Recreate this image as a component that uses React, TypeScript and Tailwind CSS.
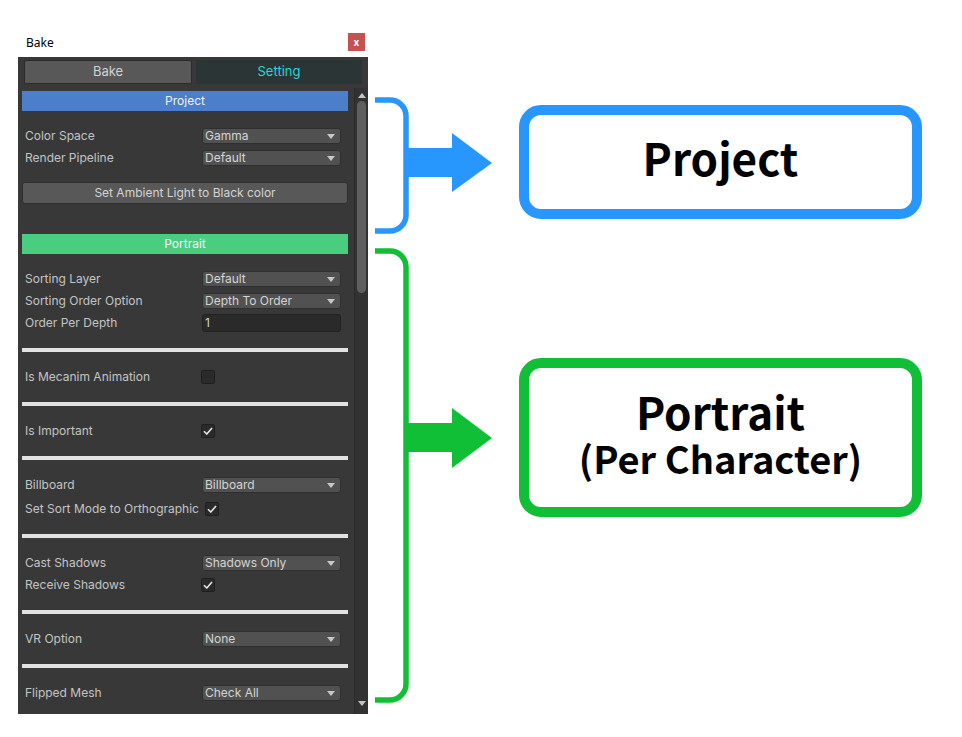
import React from 'react'

type Row =
  | { label: string; kind: 'dropdown'; value: string }
  | { label: string; kind: 'field'; value: string }
  | { label: string; kind: 'check'; on: boolean; shift?: boolean }

const portraitGroups: Row[][] = [
  [
    { label: 'Sorting Layer', kind: 'dropdown', value: 'Default' },
    { label: 'Sorting Order Option', kind: 'dropdown', value: 'Depth To Order' },
    { label: 'Order Per Depth', kind: 'field', value: '1' },
  ],
  [{ label: 'Is Mecanim Animation', kind: 'check', on: false }],
  [{ label: 'Is Important', kind: 'check', on: true }],
  [
    { label: 'Billboard', kind: 'dropdown', value: 'Billboard' },
    { label: 'Set Sort Mode to Orthographic', kind: 'check', on: true, shift: true },
  ],
  [
    { label: 'Cast Shadows', kind: 'dropdown', value: 'Shadows Only' },
    { label: 'Receive Shadows', kind: 'check', on: true },
  ],
  [{ label: 'VR Option', kind: 'dropdown', value: 'None' }],
  [{ label: 'Flipped Mesh', kind: 'dropdown', value: 'Check All' }],
]

function Dropdown({ value }: { value: string }) {
  return (
    <div className="h-[16px] w-[139px] rounded-[3px] bg-[#515151] border border-[#2f2f2f] flex items-center justify-between pl-[2px] pr-[5px] text-[#d4d4d4]">
      <span className="leading-none">{value}</span>
      <svg width="8" height="5" viewBox="0 0 8 5">
        <path d="M0 0 H8 L4 5 Z" fill="#c8c8c8" />
      </svg>
    </div>
  )
}

function Checkbox({ on }: { on: boolean }) {
  return (
    <div className="w-[14px] h-[14px] rounded-[2px] bg-[#2a2a2a] border border-[#1f1f1f] flex items-center justify-center">
      {on && (
        <svg width="10" height="8" viewBox="0 0 10 8">
          <path d="M1 4.2 L3.8 7 L9 1" fill="none" stroke="#e6e6e6" strokeWidth="1.6" />
        </svg>
      )}
    </div>
  )
}

function FieldRow({ row, extraTop }: { row: Row; extraTop?: boolean }) {
  return (
    <div className={`h-[22px] flex items-center pl-[3px] ${extraTop ? 'mt-[2px]' : ''}`}>
      <div className="w-[177px] shrink-0 whitespace-nowrap text-[#c4c4c4]">{row.label}</div>
      {row.kind === 'dropdown' && <Dropdown value={row.value} />}
      {row.kind === 'field' && (
        <div className="h-[18px] w-[139px] rounded-[3px] bg-[#2a2a2a] border border-[#212121] flex items-center pl-[2px] text-[#d4d4d4]">
          {row.value}
        </div>
      )}
      {row.kind === 'check' && (
        <div className={row.shift ? 'ml-[3px]' : '-ml-[1px]'}>
          <Checkbox on={row.on} />
        </div>
      )}
    </div>
  )
}

function Separator() {
  return <div className="h-[4px] bg-[#e2e2e2]" />
}

function UnityWindow() {
  return (
    <div className="w-[350px] ml-[18px] mt-[30px] font-['Inter',sans-serif] text-[12px]">
      <div className="h-[27px] bg-white flex items-center justify-between pl-[8px] pr-[3px]">
        <span className="font-['Noto_Sans',sans-serif] text-[12px] text-black -mt-[2px]">Bake</span>
        <div className="w-[17px] h-[18px] bg-[#c75050] flex items-center justify-center text-white text-[10px] font-bold leading-none mt-[-4px]">
          x
        </div>
      </div>
      <div className="h-[657px] bg-[#383838] flex flex-col overflow-hidden">
        <div className="flex gap-[4px] px-[6px] pt-[3px]">
          <div className="h-[24px] flex-1 rounded-[2px] bg-[#585858] border border-[#2c2c2c] flex items-center justify-center text-[13px] text-[#d2d2d2]">
            Bake
          </div>
          <div className="h-[24px] flex-1 bg-[#2b3535] flex items-center justify-center text-[13px] text-[#2ad6d6]">
            Setting
          </div>
        </div>
        <div className="flex mt-[4px] flex-1 min-h-0">
          <div className="w-[326px] ml-[4px] pt-[3px] overflow-hidden">
            <div className="h-[20px] bg-[#4b7fcc] flex items-center justify-center text-[#eef2f8]">Project</div>
            <div className="pt-[14px]">
              <FieldRow row={{ label: 'Color Space', kind: 'dropdown', value: 'Gamma' }} />
              <FieldRow row={{ label: 'Render Pipeline', kind: 'dropdown', value: 'Default' }} />
              <div className="mt-[13px] h-[22px] rounded-[3px] bg-[#585858] border border-[#2f2f2f] flex items-center justify-center text-[#d4d4d4]">
                Set Ambient Light to Black color
              </div>
            </div>
            <div className="h-[20px] mt-[30px] bg-[#4bcd80] flex items-center justify-center text-[#f2f6f2]">Portrait</div>
            {portraitGroups.map((group, gi) => (
              <div key={gi}>
                {gi > 0 && <Separator />}
                <div className="py-[14px]">
                  {group.map((row, ri) => (
                    <FieldRow key={row.label} row={row} extraTop={row.kind === 'check' && row.shift && ri > 0} />
                  ))}
                </div>
              </div>
            ))}
          </div>
          <div className="w-[14px] ml-[6px] bg-[#323232] border-l border-[#2a2a2a] flex flex-col items-center">
            <svg width="8" height="5" viewBox="0 0 8 5" className="mt-[5px]">
              <path d="M0 5 H8 L4 0 Z" fill="#c4c4c4" />
            </svg>
            <div className="w-[9px] h-[192px] mt-[3px] rounded-full bg-[#5f5f5f]" />
            <div className="flex-1" />
            <svg width="8" height="5" viewBox="0 0 8 5" className="mb-[8px]">
              <path d="M0 0 H8 L4 5 Z" fill="#c4c4c4" />
            </svg>
          </div>
        </div>
      </div>
    </div>
  )
}

function Brackets() {
  const blue = '#2797fe'
  const green = '#10bf35'
  return (
    <svg width="142" height="737" viewBox="0 0 142 737" className="shrink-0">
      <path d="M7 100 H22 A16 16 0 0 1 38 116 V215 A16 16 0 0 1 22 231 H7" fill="none" stroke={blue} strokeWidth="5.5" />
      <rect x="38" y="148" width="47" height="29" fill={blue} />
      <path d="M84 133 L124 163 L84 192 Z" fill={blue} />
      <path d="M7 251 H22 A16 16 0 0 1 38 267 V684 A16 16 0 0 1 22 700 H7" fill="none" stroke={green} strokeWidth="5.5" />
      <rect x="38" y="423" width="47" height="29" fill={green} />
      <path d="M84 408 L124 438 L84 468 Z" fill={green} />
    </svg>
  )
}

export default function App() {
  return (
    <div className="w-[962px] h-[737px] bg-white flex items-start overflow-hidden">
      <UnityWindow />
      <Brackets />
      <div className="ml-[9px] flex flex-col font-['Noto_Sans_CJK_KR','Noto_Sans',sans-serif] font-bold text-black">
        <div className="mt-[105px] w-[403px] h-[114px] rounded-[22px] border-[10px] border-[#2797fe] flex items-center justify-center pb-[10px]">
          <div className="text-[44px] leading-none">Project</div>
        </div>
        <div className="mt-[139px] w-[403px] h-[159px] rounded-[22px] border-[10px] border-[#10bf35] flex flex-col items-center justify-center pb-[8px]">
          <div className="text-[44px] leading-[48px] h-[48px] overflow-visible">Portrait</div>
          <div className="text-[38px] leading-[46px] h-[46px] overflow-visible">(Per Character)</div>
        </div>
      </div>
    </div>
  )
}
